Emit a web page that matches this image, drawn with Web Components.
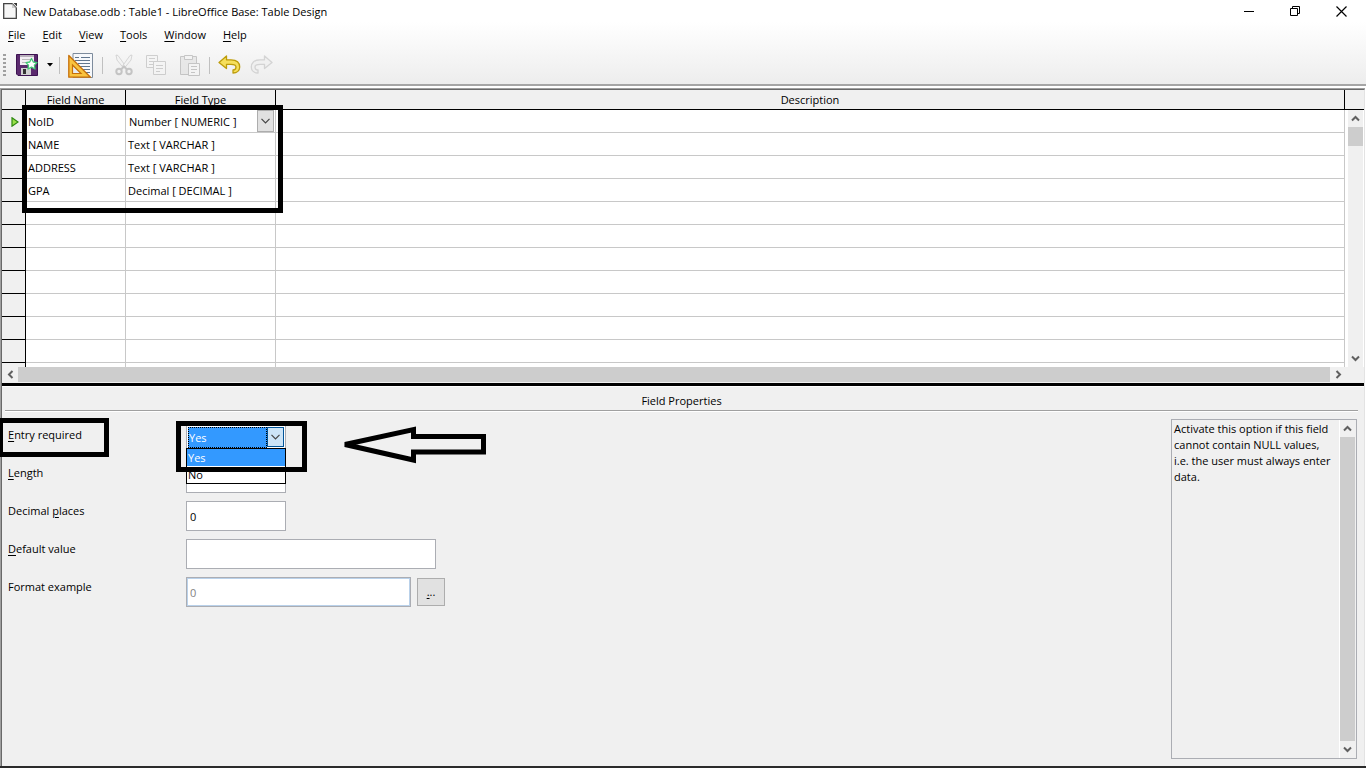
<!DOCTYPE html>
<html lang="en">
<head>
<meta charset="utf-8">
<title>New Database.odb : Table1 - LibreOffice Base: Table Design</title>
<style>
  html, body { height: 100%; margin: 0; }
  body {
    font: 11px/16px "Open Sans", "Noto Sans", sans-serif;
    color: #000;
    background: #fff;
    overflow: hidden;
  }
</style>
</head>
<body>
<app-window>
  <title-bar slot="title">New Database.odb : Table1 - LibreOffice Base: Table Design</title-bar>
  <menu-bar slot="menu" items="_File|_Edit|_View|_Tools|_Window|_Help"></menu-bar>
  <tool-bar slot="tools"></tool-bar>
  <field-grid></field-grid>
  <field-properties>
    <property-row label="_Entry required" kind="list" options="Yes|No" highlight></property-row>
    <property-row label="_Length"></property-row>
    <property-row label="Decimal _places" value="0"></property-row>
    <property-row label="_Default value" size="wide"></property-row>
    <property-row label="Format example" value="0" size="format" kind="format"></property-row>
    <help-panel slot="help">Activate this option if this field cannot contain NULL values, i.e. the user must always enter data.</help-panel>
  </field-properties>
</app-window>

<script>
// "_File" -> "<u>F</u>ile"
function mnemonic(text) {
  return text.replace(/_(\w)/, "<u>$1</u>");
}

const CHEVRON = `<svg width="9" height="6" viewBox="0 0 9 6" aria-hidden="true"><path d="M.5.8 4.5 4.8 8.5.8" fill="none" stroke="#444" stroke-width="1.2"/></svg>`;

const BUTTON_RESET = `
  button { border: 0; padding: 0; margin: 0; background: none; font: inherit; color: inherit; }
  svg { display: block; }
`;

class AppWindow extends HTMLElement {
  constructor() {
    super();
    this.attachShadow({ mode: "open" });
    this.shadowRoot.innerHTML = `
      <style>
        :host { display: flex; flex-direction: column; height: 100vh; box-sizing: border-box; border-bottom: 2px solid #2b2b2b; }
        header { background: linear-gradient(#fff 22px, #ededed); border-bottom: 2px solid #a5a5a5; margin-bottom: 2px; }
        main { flex: 1; min-height: 0; display: flex; border: solid #a0a0a0; border-width: 1px 0 0 1px; margin-right: 1px; }
        .inner { flex: 1; min-width: 0; display: flex; flex-direction: column; background: #f0f0f0; border: solid #696969; border-width: 1px 0 0 1px; border-right: 1px solid #e3e3e3; }
      </style>
      <header><slot name="title"></slot><slot name="menu"></slot><slot name="tools"></slot></header>
      <main><div class="inner"><slot></slot></div></main>
    `;
  }
}

class TitleBar extends HTMLElement {
  constructor() {
    super();
    this.attachShadow({ mode: "open" });
    this.shadowRoot.innerHTML = `
      <style>
        ${BUTTON_RESET}
        :host { display: flex; align-items: center; height: 22px; padding: 0 2px 0 3px; }
        .text { flex: 1; margin-left: 6px; padding-top: 2px; }
        button { width: 46px; height: 20px; display: flex; align-items: center; justify-content: center; }
      </style>
      <svg width="14" height="16" viewBox="0 0 14 16"><path d="M.7.7H9L13.3 5V15.3H.7Z" fill="#f6f6f6" stroke="#444" stroke-width="1.3"/><path d="M9 .8V5H13Z" fill="#ccc"/><path d="M10.500 0H14V3.500Z" fill="#333"/></svg>
      <span class="text"><slot></slot></span>
      <button aria-label="Minimize"><svg width="10" height="11"><path d="M0 5.500H10" stroke="#000"/></svg></button>
      <button aria-label="Restore"><svg width="11" height="11" fill="none" stroke="#000"><path d="M.5 2.500H7.500V9.500H.5ZM2.500 2V.5H9.500V7.500H8"/></svg></button>
      <button aria-label="Close"><svg width="11" height="11"><path d="M.5.5 10.500 10.500M10.500.5.5 10.500" stroke="#000" stroke-width="1.200"/></svg></button>
    `;
  }
}

class MenuBar extends HTMLElement {
  connectedCallback() {
    this.attachShadow({ mode: "open" });
    const items = this.getAttribute("items").split("|");
    this.shadowRoot.innerHTML = `
      <style>
        ${BUTTON_RESET}
        nav { display: flex; align-items: center; gap: 17px; height: 26px; padding-left: 8px; }
        u { text-underline-offset: 2px; }
      </style>
      <nav>${items.map((item) => `<button>${mnemonic(item)}</button>`).join("")}</nav>
    `;
  }
}

class ToolBar extends HTMLElement {
  constructor() {
    super();
    this.attachShadow({ mode: "open" });
    this.shadowRoot.innerHTML = `
      <style>
        ${BUTTON_RESET}
        :host { display: flex; align-items: center; height: 34px; padding: 0 0 2px 3px; }
        .grip { width: 3px; height: 23px; background: repeating-linear-gradient(#a0a0a0 0 2px, transparent 2px 4px); margin-right: 10px; }
        .sep { width: 1px; height: 17px; background: #c0c0c0; }
        .group { display: flex; align-items: center; gap: 9px; padding: 0 8px; }
        .group.first { padding: 0 6px 0 0; }
        button[disabled] { opacity: .5; }
      </style>
      <div class="grip"></div>
      <div class="group first">
        <button aria-label="Save"><svg width="22" height="22" viewBox="0 0 22 22">
          <path d="M.5.5H21.500V21.500H2L.5 20Z" fill="#5b2a6e" stroke="#3c1250"/>
          <path d="M4 1H18V11H4Z" fill="#f3eef4"/><path d="M4 1H18V3H4Z" fill="#b8b0bb"/>
          <path d="M6 5.500H16M6 8.500H12" stroke="#bbb"/>
          <path d="M5 14H15V21H5Z" fill="#d0d0d0"/><path d="M7 15H10V20H7Z" fill="#333"/>
          <path d="M15.500 4.500 17.300 8 21 8.600 18.400 11.200 19 15 15.500 13.200 12 15 12.500 11.200 10 8.600 13.700 8Z" fill="#fff" stroke="#43c774" stroke-width="1.300" stroke-linejoin="round"/>
        </svg></button>
        <button aria-label="Save options"><svg width="6" height="4"><path d="M0 0H6L3 3.500Z"/></svg></button>
      </div>
      <div class="sep"></div>
      <div class="group">
        <button aria-label="Switch design view"><svg width="26" height="25" viewBox="0 0 26 25">
          <path d="M5 .5H24.500V24.500H5Z" fill="#f6f8fb" stroke="#7d8b9c"/>
          <path d="M7 4.500H11M13 4.500H22M7 7.500H22M10 10.500H22M12 13.500H22M15 16.500H22M18 19.500H22" stroke="#60758d"/>
          <path d="M.8 2.500V24.200H22.500Z" fill="#f9c440" stroke="#c66f08" stroke-width="1.300" stroke-linejoin="round"/>
          <path d="M4.500 12V20.500H13Z" fill="#e6edf5" stroke="#c66f08" stroke-width="1.200"/>
        </svg></button>
      </div>
      <div class="sep"></div>
      <div class="group">
        <button aria-label="Cut" disabled><svg width="26" height="22" viewBox="0 0 26 22">
          <path d="M5 1 7 1.500 14.500 12 12.500 14 6 6Z" fill="#f3f3f3" stroke="#a8a8a8" stroke-width=".8"/>
          <path d="M21 1 19 1.500 11.500 12 13.500 14 20 6Z" fill="#f3f3f3" stroke="#a8a8a8" stroke-width=".8"/>
          <g fill="none" stroke="#999" stroke-width="2"><circle cx="8" cy="17.500" r="2.700"/><circle cx="18" cy="17.500" r="2.700"/><path d="M10 15.500 13 12.500 16 15.500"/></g>
        </svg></button>
        <button aria-label="Copy" disabled><svg width="20" height="22" viewBox="0 0 20 22" stroke="#aaa" fill="#f6f6f6">
          <path d="M.5 1.500H11.500V13.500H.5Z"/><path d="M3 4.500H9M3 7.500H9M3 10.500H7"/>
          <path d="M7.500 7.500H19.500V20.500H7.500Z"/><path d="M10 11.500H17M10 14.500H17M10 17.500H14"/>
        </svg></button>
        <button aria-label="Paste" disabled><svg width="26" height="22" viewBox="0 0 26 22" stroke="#999" fill="#ddd">
          <path d="M5.500 2.500H21.500V20.500H5.500Z"/><path d="M9.500 1.500H17.500V5.500H9.500Z" fill="#f3f3f3"/>
          <path d="M13.500 9.500H24.500V21.500H13.500Z" fill="#f6f6f6"/><path d="M16 12.500H22M16 15.500H22M16 18.500H20"/>
        </svg></button>
      </div>
      <div class="sep"></div>
      <div class="group">
        <button aria-label="Undo"><svg width="23" height="20" viewBox="0 0 23 20">
          <path d="M1 7.500 8.500 1V4.800H13C19 4.800 21.700 8 21.700 12 21.700 15.500 19 18 15 18V15C17 15 18 13.700 18 12 18 10 16.500 9.300 13 9.300H8.500V13.500Z" fill="#f6df5c" stroke="#bd9c0b" stroke-width="1.300" stroke-linejoin="round"/>
        </svg></button>
        <button aria-label="Redo" disabled><svg width="23" height="20" viewBox="0 0 23 20">
          <path d="M22 7.500 14.500 1V4.800H10C4 4.800 1.300 8 1.300 12 1.300 15.500 4 18 8 18V15C6 15 5 13.700 5 12 5 10 6.500 9.300 10 9.300H14.500V13.500Z" fill="#eee" stroke="#b5b5b5" stroke-width="1.300" stroke-linejoin="round"/>
        </svg></button>
      </div>
    `;
  }
}

// Scroll bar with two arrow buttons; the thumb takes its length from --thumb.
class ScrollBar extends HTMLElement {
  constructor() {
    super();
    this.attachShadow({ mode: "open" });
    const arrow = `<svg width="9" height="7" viewBox="0 0 9 7"><path d="M1 5.500 4.500 2 8 5.500" fill="none" stroke="#606060" stroke-width="2"/></svg>`;
    this.shadowRoot.innerHTML = `
      <style>
        ${BUTTON_RESET}
        :host { display: flex; flex-direction: column; width: 15px; background: #f0f0f0; }
        button { flex: none; width: 15px; height: 17px; display: flex; align-items: center; justify-content: center; }
        .track { flex: 1; display: flex; flex-direction: inherit; }
        .thumb { flex: 0 0 var(--thumb, 100%); background: #cdcdcd; }
        button:last-child svg { transform: rotate(180deg); }
        :host([horizontal]) { flex-direction: row; width: auto; height: 15px; }
        :host([horizontal]) button { width: 16px; height: 15px; }
        :host([horizontal]) button svg { transform: rotate(-90deg); }
        :host([horizontal]) button:last-child svg { transform: rotate(90deg); }
      </style>
      <button aria-label="Scroll back">${arrow}</button>
      <div class="track"><div class="thumb"></div></div>
      <button aria-label="Scroll forward">${arrow}</button>
    `;
  }
}

// Thick black frame laid over what it points out.
class MarkBox extends HTMLElement {
  constructor() {
    super();
    this.attachShadow({ mode: "open" });
    this.shadowRoot.innerHTML = `
      <style>
        :host { display: block; position: absolute; z-index: 3; box-sizing: border-box; border: 5px solid #000; pointer-events: none; }
      </style>
    `;
  }
}

class FieldGrid extends HTMLElement {
  constructor() {
    super();
    this.attachShadow({ mode: "open" });
    this.fields = [
      ["NoID", "Number [ NUMERIC ]"],
      ["NAME", "Text [ VARCHAR ]"],
      ["ADDRESS", "Text [ VARCHAR ]"],
      ["GPA", "Decimal [ DECIMAL ]"],
    ];
    this.rowCount = 12;
  }

  connectedCallback() {
    this.shadowRoot.innerHTML = `
      <style>
        :host { display: block; position: relative; border-bottom: 3px solid #000; }
        .body { display: flex; height: 277px; overflow: hidden; background: #fff; }
        .scroller { flex: 1; min-width: 0; overflow: hidden; }
        table { width: 100%; table-layout: fixed; border-spacing: 0; }
        th, td { box-sizing: border-box; padding: 0 2px; font-weight: normal; }
        thead th { height: 20px; background: #f0f0f0; border: solid #000; border-width: 0 1px 1px 0; }
        tbody th, td { height: 23px; border: solid #c8c8c8; border-width: 0 1px 1px 0; text-align: left; white-space: nowrap; }
        td { padding-top: 2px; }
        tbody th { background: #f0f0f0; border-color: #000; }
        tbody th svg { display: block; margin: 2px 0 0 7px; }
        .c1 { width: 24px; } .c2 { width: 100px; } .c3 { width: 150px; }
        td.edit { padding: 0; }
        .combo { display: flex; height: 22px; margin-right: 1px; position: relative; }
        select { flex: 1; appearance: none; border: 0; margin: 0; padding: 2px 3px 0; font: inherit; background: #fff; color: #000; outline: 0; }
        .drop { position: absolute; right: 0; top: 0; bottom: 0; width: 17px; box-sizing: border-box; background: #e1e1e1; border: 1px solid #adadad; display: flex; align-items: center; justify-content: center; pointer-events: none; }
        .side { display: flex; flex-direction: column; width: 19px; }
        .corner { height: 19px; background: #f0f0f0; border-bottom: 1px solid #000; }
        .side scroll-bar { flex: 1; margin: 0 1px 0 3px; --thumb: 19px; }
        scroll-bar[horizontal] { margin: 0 18px 1px 0; }
        mark-box { left: 20px; top: 15px; width: 261px; height: 108px; }
      </style>
      <div class="body">
        <div class="scroller">
          <table>
            <colgroup><col class="c1"><col class="c2"><col class="c3"><col></colgroup>
            <thead><tr><th></th><th scope="col">Field Name</th><th scope="col">Field Type</th><th scope="col">Description</th></tr></thead>
            <tbody>${this._rows()}</tbody>
          </table>
        </div>
        <div class="side"><div class="corner"></div><scroll-bar></scroll-bar></div>
      </div>
      <scroll-bar horizontal></scroll-bar>
      <mark-box></mark-box>
    `;
  }

  _rows() {
    const marker = `<svg width="8" height="10" viewBox="0 0 8 10"><path d="M1 .8 7 5 1 9.200Z" fill="#9be04a" stroke="#2f8a10" stroke-width="1.200"/></svg>`;
    let html = "";
    for (let i = 0; i < this.rowCount; i++) {
      const [name, type] = this.fields[i] || ["", ""];
      const typeCell = i === 0
        ? `<td class="edit"><div class="combo"><select aria-label="Field Type"><option>${type}</option></select><span class="drop">${CHEVRON}</span></div></td>`
        : `<td>${type}</td>`;
      html += `<tr><th>${i === 0 ? marker : ""}</th><td>${name}</td>${typeCell}<td></td></tr>`;
    }
    return html;
  }
}

class PropertyRow extends HTMLElement {
  connectedCallback() {
    this.attachShadow({ mode: "open" });
    const highlight = this.hasAttribute("highlight");
    this.shadowRoot.innerHTML = `
      <style>
        ${BUTTON_RESET}
        :host { display: flex; position: relative; height: 30px; }
        label { width: 178px; line-height: 20px; }
        u { text-underline-offset: 2px; }
        input { box-sizing: border-box; width: 100px; height: 30px; margin: 0; padding: 0 3px; border: 1px solid #abadb3; border-radius: 0; background: #fff; font: inherit; color: #000; }
        :host([size="wide"]) input { width: 250px; }
        :host([size="format"]) input { width: 225px; color: #838383; box-shadow: inset 0 0 0 1px #b9d1ea; }
        .more { align-self: center; width: 28px; height: 28px; box-sizing: border-box; margin-left: 6px; border: 1px solid #adadad; background: #e1e1e1; }
        .combo { position: relative; display: flex; box-sizing: border-box; width: 100px; height: 23px; padding: 1px 1px 0 1px; border: solid #abadb3; border-width: 1px 1px 0; background: #fff; }
        select { flex: 1; min-width: 0; appearance: none; margin: 0; padding: 0; border: 1px dotted #000; border-radius: 0; background: #3399ff; color: #fff; font: inherit; outline: 0; }
        .drop { flex: none; width: 17px; box-sizing: border-box; margin-bottom: 1px; display: flex; align-items: center; justify-content: center; border: 1px solid #005499; background: #cce4f7; }
        ul { position: absolute; z-index: 2; left: -1px; right: -1px; top: 22px; margin: 0; padding: 0; list-style: none; border: 1px solid #000; background: #fff; line-height: 17px; }
        li { padding-left: 1px; }
        li.on { background: #3399ff; color: #fff; }
        .on-label { left: -10px; top: -7px; width: 111px; height: 39px; }
        .on-field { left: 168px; top: -4px; width: 131px; height: 51px; }
        .arrow { position: absolute; left: 332px; top: -1px; }
      </style>
      <label for="field">${mnemonic(this.getAttribute("label"))}</label>
      ${this._control()}
      ${highlight ? `
        <mark-box class="on-label"></mark-box>
        <mark-box class="on-field"></mark-box>
        <svg class="arrow" width="148" height="40" viewBox="0 0 148 40" aria-hidden="true"><path d="M5 20.500 73.500 5.500V12.500H143.500V28H73.500V36Z" fill="none" stroke="#000" stroke-width="5" stroke-linejoin="miter" stroke-miterlimit="3"/></svg>` : ""}
    `;
  }

  _control() {
    const kind = this.getAttribute("kind");
    const value = this.getAttribute("value") || "";
    if (kind === "list") {
      const options = this.getAttribute("options").split("|");
      return `
        <div class="combo">
          <select id="field">${options.map((o) => `<option>${o}</option>`).join("")}</select>
          <span class="drop">${CHEVRON}</span>
          <ul role="listbox">${options.map((o, i) => `<li role="option" class="${i === 0 ? "on" : ""}">${o}</li>`).join("")}</ul>
        </div>`;
    }
    if (kind === "format") {
      return `<input id="field" value="${value}" readonly><button class="more" aria-label="Format"><u>.</u>..</button>`;
    }
    return `<input id="field" value="${value}">`;
  }
}

class HelpPanel extends HTMLElement {
  constructor() {
    super();
    this.attachShadow({ mode: "open" });
    this.shadowRoot.innerHTML = `
      <style>
        :host { display: flex; box-sizing: border-box; width: 186px; border: 1px solid #abadb3; }
        p { flex: 1; margin: 0; padding: 1px 4px 0 2px; }
        scroll-bar { border-left: 1px solid #fff; margin-right: 1px; }
      </style>
      <p><slot></slot></p>
      <scroll-bar></scroll-bar>
    `;
  }
}

class FieldProperties extends HTMLElement {
  constructor() {
    super();
    this.attachShadow({ mode: "open" });
    this.shadowRoot.innerHTML = `
      <style>
        :host { flex: 1; min-height: 0; display: flex; flex-direction: column; border-top: 1px solid #fff; }
        h2 { margin: 0 6px 0 3px; padding: 6px 0 1px; font: inherit; text-align: center; border-bottom: 1px solid #a0a0a0; box-shadow: 0 1px #fff; }
        .content { flex: 1; min-height: 0; display: flex; justify-content: space-between; padding: 8px 7px 7px 6px; }
        .rows { display: flex; flex-direction: column; gap: 8px; padding-top: 6px; }
      </style>
      <h2>Field Properties</h2>
      <div class="content">
        <div class="rows"><slot></slot></div>
        <slot name="help"></slot>
      </div>
    `;
  }
}

customElements.define("app-window", AppWindow);
customElements.define("title-bar", TitleBar);
customElements.define("menu-bar", MenuBar);
customElements.define("tool-bar", ToolBar);
customElements.define("scroll-bar", ScrollBar);
customElements.define("mark-box", MarkBox);
customElements.define("field-grid", FieldGrid);
customElements.define("property-row", PropertyRow);
customElements.define("help-panel", HelpPanel);
customElements.define("field-properties", FieldProperties);
</script>
</body>
</html>
